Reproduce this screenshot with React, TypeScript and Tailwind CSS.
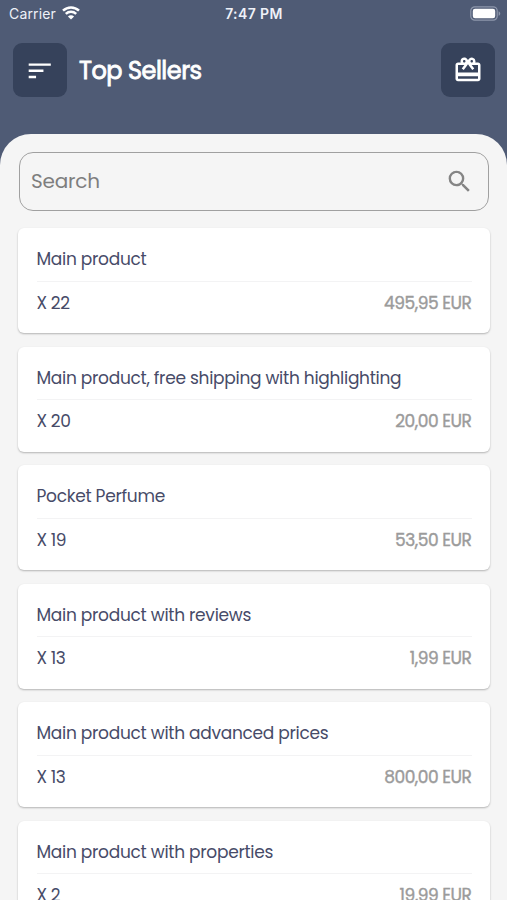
import React from 'react';
import { MdRedeem, MdSearch, MdSort } from 'react-icons/md';

const products = [
  { name: 'Main product', count: 22, total: '495,95 EUR' },
  { name: 'Main product, free shipping with highlighting', count: 20, total: '20,00 EUR' },
  { name: 'Pocket Perfume', count: 19, total: '53,50 EUR' },
  { name: 'Main product with reviews', count: 13, total: '1,99 EUR' },
  { name: 'Main product with advanced prices', count: 13, total: '800,00 EUR' },
  { name: 'Main product with properties', count: 2, total: '19,99 EUR' },
];

function StatusBar() {
  return (
    <div className="grid h-[27px] grid-cols-3 items-center pl-[9px] pr-[6px] font-['Inter',sans-serif] text-[14px] leading-[27px] text-[#eef1f8]">
      <div className="flex items-center gap-[6px]">
        <span className="tracking-[0.15px]">Carrier</span>
        <svg className="mb-[1px] h-[14px] w-[18px]" viewBox="0 0 18 14" fill="none" stroke="white" strokeWidth="2.5">
          <path d="M1 4.7C5.6.3 12.4.3 17 4.7" />
          <path d="M3.8 7.8C6.8 5 11.2 5 14.2 7.8" />
          <path d="M9 13.5 5.9 10.4C7.6 8.8 10.4 8.8 12.1 10.4Z" fill="white" stroke="none" />
        </svg>
      </div>
      <span className="mr-[2px] text-center font-semibold tracking-[0.4px]">7:47 PM</span>
      <svg className="h-[15px] w-[31px] justify-self-end" viewBox="0 0 31 15">
        <rect x="0.8" y="0.8" width="26.4" height="13.4" rx="4" fill="none" stroke="#8f98ac" strokeWidth="1.2" />
        <rect x="2.8" y="2.8" width="22.4" height="9.4" rx="2.2" fill="white" />
        <path d="M28.6 5.2c2.2 1 2.2 3.6 0 4.6z" fill="#8f98ac" />
      </svg>
    </div>
  );
}

function ProductCard({ name, count, total }: { name: string; count: number; total: string }) {
  return (
    <article className="h-[105px] shrink-0 rounded-[6px] bg-white px-[18.5px] pt-[10px] text-[17px] tracking-[-0.28px] text-[#474b68] shadow-[0_1px_2px_rgba(0,0,0,0.27)]">
      <h2 className="h-[43.5px] whitespace-nowrap border-b border-[#f3f3f4] leading-[42.5px]">{name}</h2>
      <div className="flex justify-between leading-[43px]">
        <span className="tracking-[-0.4px]">X {count}</span>
        <span className="tracking-[-0.45px] text-[#9b9b9b] [-webkit-text-stroke:0.4px_#9b9b9b]">{total}</span>
      </div>
    </article>
  );
}

export default function App() {
  return (
    <div className="flex h-[900px] w-[507px] flex-col overflow-hidden bg-[#4f5b75] font-['Poppins','Inter',sans-serif]">
      <StatusBar />
      <header className="flex h-[107px] shrink-0 items-start px-[13px] pt-[16.4px]">
        <button className="flex size-[54px] items-center justify-center rounded-[9px] bg-[#36425b] text-white">
          <MdSort className="size-[29.5px]" />
        </button>
        <h1 className="ml-[12px] text-[24px] font-normal leading-[56px] tracking-[-0.5px] text-white [-webkit-text-stroke:0.8px_white]">
          Top Sellers
        </h1>
        <button className="ml-auto mr-[-1px] flex size-[54px] items-center justify-center rounded-[9px] bg-[#36425b] text-white">
          <MdRedeem className="size-[30px]" />
        </button>
      </header>
      <main className="min-h-0 flex-1 overflow-hidden rounded-t-[31px] bg-[#f5f5f5] pl-[18px] pr-[17px] pt-[18px]">
        <label className="mx-[1px] flex h-[59px] items-center rounded-[14px] border-[1.5px] border-[#a0a0a0] pl-[11px] pr-[14.5px]">
          <input
            className="mb-px w-full bg-transparent text-[20px] tracking-[-0.2px] outline-none placeholder:text-[#7e7e7e]"
            placeholder="Search"
          />
          <MdSearch className="size-[29px] shrink-0 text-[#858585]" />
        </label>
        <div className="mt-[17px] flex flex-col gap-[13.5px]">
          {products.map((product) => (
            <ProductCard key={product.name} {...product} />
          ))}
        </div>
      </main>
    </div>
  );
}
